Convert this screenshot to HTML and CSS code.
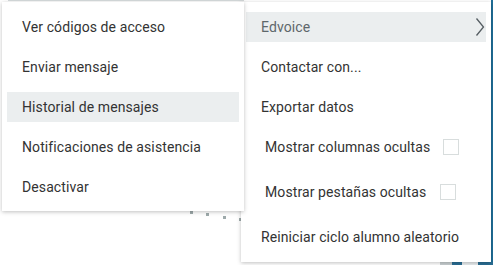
FILE: index.html
```html
<!DOCTYPE html>
<html lang="es">
<head>
<meta charset="utf-8">
<link rel="stylesheet" href="styles.css">
</head>
<body>
<div class="stage">
  <div class="edge-right"></div>
  <div class="bottom-strip">
    <span class="bs-grey"></span><span class="bs-blue"></span><span class="bs-white"></span><span class="bs-blue2"></span>
  </div>
  <div class="top-line"></div>
  <div class="dots">
    <span class="dot d1"></span><span class="dot d2"></span><span class="dot d3"></span><span class="dot d4"></span>
  </div>

  <ul class="menu menu-right">
    <li class="item item-sub active">
      <span class="label muted">Edvoice</span>
      <svg class="chev" width="10" height="20" viewBox="0 0 10 20"><path d="M1.5 1.5 L8.5 10 L1.5 18.5" fill="none" stroke="#555d62" stroke-width="1.3"/></svg>
    </li>
    <li class="item">Contactar con...</li>
    <li class="item">Exportar datos</li>
    <li class="item item-check">
      <span class="label">Mostrar columnas ocultas</span>
      <span class="box box1"></span>
    </li>
    <li class="item item-check tall">
      <span class="label">Mostrar pestañas ocultas</span>
      <span class="box box2"></span>
    </li>
    <li class="item tall-last">Reiniciar ciclo alumno aleatorio</li>
  </ul>

  <ul class="menu menu-left">
    <li class="item">Ver códigos de acceso</li>
    <li class="item">Enviar mensaje</li>
    <li class="item active">Historial de mensajes</li>
    <li class="item">Notificaciones de asistencia</li>
    <li class="item">Desactivar</li>
  </ul>
</div>
</body>
</html>
```

FILE: styles.css
```css
* { box-sizing: border-box; }
html, body { margin: 0; padding: 0; background: #fff; }
body { font-family: Roboto, "Noto Sans", "Liberation Sans", sans-serif; font-size: 14px; color: #333; letter-spacing: 0.1px; }

.stage { position: relative; width: 493px; height: 265px; overflow: hidden; background: #fff; }

.edge-right { position: absolute; right: 0; top: 0; width: 2px; height: 265px; background: #1f6f99; }
.bottom-strip { position: absolute; left: 440px; bottom: 0; width: 53px; height: 3px; display: flex; }
.bs-grey { width: 12px; background: #c9d0d2; }
.bs-blue { width: 10px; background: #2a6e94; }
.bs-white { width: 16px; background: #e8ecee; }
.bs-blue2 { flex: 1; background: #2a6e94; }
.top-line { position: absolute; left: 8px; top: 0; width: 236px; height: 1px; background: #d5dadb; }

.dots .dot { position: absolute; width: 3px; height: 3px; background: #9eaaab; }
.d1 { left: 190px; top: 211px; }
.d2 { left: 206px; top: 213px; }
.d3 { left: 223px; top: 216px; }
.d4 { left: 239px; top: 218px; }

.menu { list-style: none; margin: 0; padding: 5px 0; position: absolute; background: #fff;
  display: flex; flex-direction: column;
  box-shadow: 0 1px 4px rgba(0,0,0,0.25); }
.menu-left { left: 2px; top: 2px; width: 242px; z-index: 2; padding: 5px 0 4px; }
.menu-right { left: 241px; top: 2px; width: 250px; z-index: 1; height: 260px; }

.item { margin: 5px; height: 30px; flex: 0 0 30px; padding: 0 15px; display: flex; align-items: center; white-space: nowrap; }
.item.active { background: #ebeeef; }
.muted { color: #5e676b; }
.item-sub { justify-content: space-between; padding-right: 1px; }
.chev { display: block; }

.menu-right .item-check { padding-left: 19px; }
.item-check .label { flex: 0 0 auto; }
.box { width: 16px; height: 16px; border: 1px solid #d8dddd; background: #fff; margin-left: auto; }
.box1 { margin-right: 12px; }
.box2 { margin-right: 15px; }
.item.tall { margin-top: 10px; margin-bottom: 10px; }
.item.tall-last { margin-top: 5px; }
```
